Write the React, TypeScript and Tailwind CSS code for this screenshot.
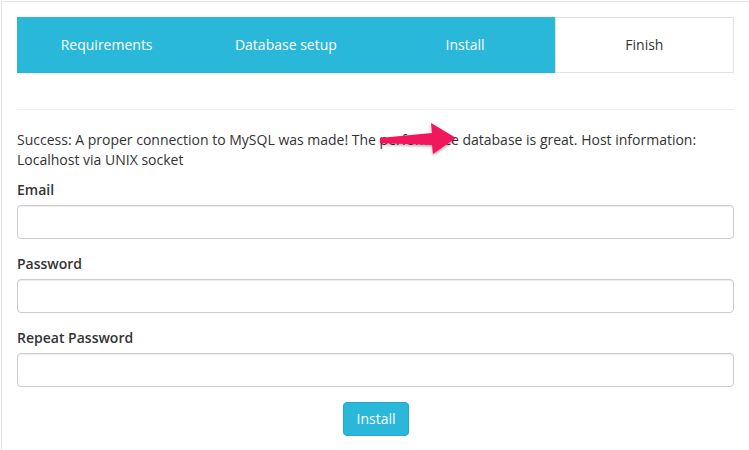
const steps = ['Requirements', 'Database setup', 'Install', 'Finish'];

const Field = ({ label, type }: { label: string; type: string }) => (
  <div className="mb-[15px]">
    <label className="mb-[5px] block font-semibold leading-5 text-[#333]">{label}</label>
    <input
      type={type}
      className="block h-[34px] w-full rounded-[4px] border border-[#ccc] bg-white px-3 shadow-[inset_0_1px_1px_rgba(0,0,0,0.075)] outline-none"
    />
  </div>
);

const App = () => {
  return (
    <div
      className="relative h-[450px] w-[749px] overflow-hidden bg-white pl-px pt-px text-[14px] leading-5 text-[#333]"
      style={{ fontFamily: '"Open Sans", "Noto Sans", sans-serif' }}
    >
      <div className="h-full border-l border-t border-[#e5e5e5] px-[15px] pt-[15px]">
        {/* Wizard steps */}
        <div className="grid h-14 grid-cols-4">
          {steps.map((step, i) =>
            i < 3 ? (
              <div key={step} className="flex items-center justify-center bg-[#29b8d9] text-white">
                {step}
              </div>
            ) : (
              <div key={step} className="flex items-center justify-center border border-[#e2e2e2] bg-white text-[#333]">
                {step}
              </div>
            )
          )}
        </div>

        <hr className="mt-9 border-t border-[#eee]" />

        <p className="mt-5 mb-[10px]">
          Success: A proper connection to MySQL was made! The perfomance database is great. Host information:
          Localhost via UNIX socket
        </p>

        <form>
          <Field label="Email" type="email" />
          <Field label="Password" type="password" />
          <Field label="Repeat Password" type="password" />
          <div className="flex justify-center pl-px">
            <button
              type="button"
              className="h-[34px] rounded-[4px] border border-[#23a9c8] bg-[#29b8d9] px-3 text-white"
            >
              Install
            </button>
          </div>
        </form>
      </div>

      {/* annotation arrow */}
      <svg className="absolute left-[376px] top-[120px]" width="90" height="40" viewBox="0 0 90 40">
        <defs>
          <filter id="sh" x="-20%" y="-30%" width="140%" height="160%">
            <feDropShadow dx="0" dy="1.5" stdDeviation="1.5" floodColor="#000" floodOpacity="0.35" />
          </filter>
        </defs>
        <path
          d="M4 18 L56 13 L55 3 L80 18 L57 34 L56 25 L4 23 Z"
          fill="#f2145d"
          filter="url(#sh)"
        />
      </svg>
    </div>
  );
};

export default App;
